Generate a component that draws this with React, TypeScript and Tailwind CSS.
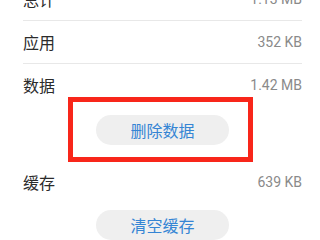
const rows = [
  { label: '总计', value: '1.13 MB', divider: true },
  { label: '应用', value: '352 KB', divider: true },
];

function Row({ label, value, divider, className = '' }: { label: string; value: string; divider?: boolean; className?: string }) {
  return (
    <div className={`flex items-center justify-between ${divider ? 'border-b border-[#e8e8e8]' : ''} ${className}`}>
      <span className="text-[16px] text-[#2b2b2b]">{label}</span>
      <span className="text-[14px] text-[#8a8a8a] font-['Roboto','Noto_Sans_CJK_SC',sans-serif]">{value}</span>
    </div>
  );
}

function PillButton({ children }: { children: string }) {
  return (
    <button className="ml-[73px] flex h-[30px] w-[133px] items-center justify-center rounded-full bg-[#efefef] text-[16px] text-[#3585d4]">
      {children}
    </button>
  );
}

export default function App() {
  return (
    <div className="h-[240px] w-[320px] overflow-hidden bg-white font-['Noto_Sans_CJK_SC',sans-serif]">
      <div className="mt-[-22px] px-[23px] pr-[18px]">
        {rows.map((r) => (
          <Row key={r.label} {...r} className="h-[43px]" />
        ))}
        <Row label="数据" value="1.42 MB" className="h-[42px]" />
        <div className="relative mt-[9px]">
          <div className="absolute left-[45px] top-[-18px] h-[65px] w-[185px] border-[5px] border-[#f8261a]" />
          <PillButton>删除数据</PillButton>
        </div>
        <Row label="缓存" value="639 KB" className="mt-[15px] h-[44px]" />
        <div className="mt-[6px]">
          <PillButton>清空缓存</PillButton>
        </div>
      </div>
    </div>
  );
}
